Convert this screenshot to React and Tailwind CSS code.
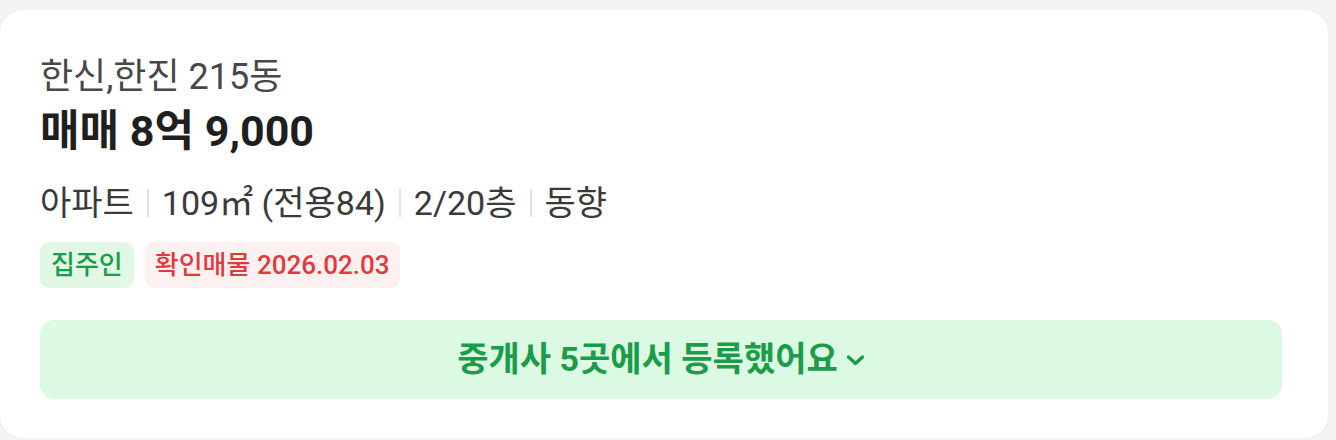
const FONT = "font-['Roboto','Noto_Sans_CJK_KR',sans-serif]"

function Sep() {
  return <span className="mx-[13px] inline-block h-[28px] w-[2px] bg-[#e2e2e2]" />
}

export default function App() {
  return (
    <div className={`h-[440px] w-[1336px] overflow-hidden bg-[#f2f3f5] pt-[10px] ${FONT}`}>
      <div className="flex h-[428px] w-[1328px] flex-col rounded-[24px] bg-white pt-[45px] pr-[46px] pb-[38px] pl-10">
        <p className="text-[36px] leading-[44px] text-[#484848]">한신,한진 215동</p>
        <p className="mt-[6px] text-[43px] font-bold leading-[52px] text-[#1f1f1f]">
          매매 8억 9,000
        </p>
        <div className="mt-[24px] flex items-center text-[34px] leading-[44px] text-[#3a3a3a]">
          <span>아파트</span>
          <Sep />
          <span>109㎡ (전용84)</span>
          <Sep />
          <span>2/20층</span>
          <Sep />
          <span>동향</span>
        </div>
        <div className="mt-[17px] flex gap-[11px]">
          <span className="flex h-[46px] items-center rounded-[9px] bg-[#e1f8e7] px-[11px] text-[26px] font-medium text-[#1c9b48]">
            집주인
          </span>
          <span className="flex h-[46px] items-center rounded-[9px] bg-[#fdf0f0] px-[10px] text-[26px] font-medium text-[#e0393e]">
            확인매물 2026.02.03
          </span>
        </div>
        <button className="mt-[32px] flex h-[79px] w-full items-center justify-center gap-[8px] rounded-[14px] bg-[#dcf9e3] text-[34px] font-bold text-[#1a9c48]">
          <span>중개사 5곳에서 등록했어요</span>
          <svg width="19" height="12" viewBox="0 0 19 12" fill="none">
            <path d="M2.5 3 L9.5 9.5 L16.5 3" stroke="#1a9c48" strokeWidth="3.4" strokeLinecap="round" strokeLinejoin="round" />
          </svg>
        </button>
      </div>
    </div>
  )
}
